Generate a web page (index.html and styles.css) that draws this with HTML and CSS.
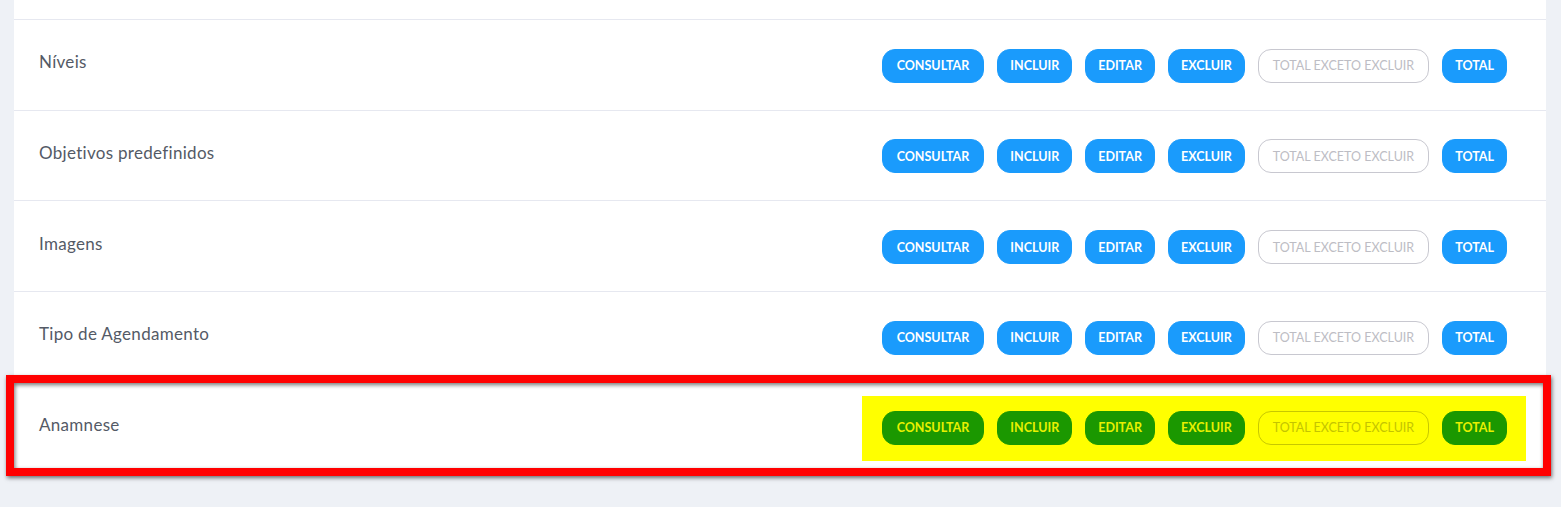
FILE: index.html
```html
<!doctype html>
<html>

<head>
    <meta charset="utf-8" />
    <title>Permissões</title>
    <link rel="stylesheet" href="styles.css">
</head>

<body>
    <div id="wrap">
        <div class="card">
            <!-- linha anterior, cortada no topo -->
            <div class="row row-cut"></div>

            <div class="row">
                <span class="label">Níveis</span>
                <div class="actions">
                    <a class="btn" href="javascript:;">CONSULTAR</a>
                    <a class="btn" href="javascript:;">INCLUIR</a>
                    <a class="btn" href="javascript:;">EDITAR</a>
                    <a class="btn" href="javascript:;">EXCLUIR</a>
                    <a class="btn btn-outline" href="javascript:;">TOTAL EXCETO EXCLUIR</a>
                    <a class="btn" href="javascript:;">TOTAL</a>
                </div>
            </div>

            <div class="row">
                <span class="label">Objetivos predefinidos</span>
                <div class="actions">
                    <a class="btn" href="javascript:;">CONSULTAR</a>
                    <a class="btn" href="javascript:;">INCLUIR</a>
                    <a class="btn" href="javascript:;">EDITAR</a>
                    <a class="btn" href="javascript:;">EXCLUIR</a>
                    <a class="btn btn-outline" href="javascript:;">TOTAL EXCETO EXCLUIR</a>
                    <a class="btn" href="javascript:;">TOTAL</a>
                </div>
            </div>

            <div class="row">
                <span class="label">Imagens</span>
                <div class="actions">
                    <a class="btn" href="javascript:;">CONSULTAR</a>
                    <a class="btn" href="javascript:;">INCLUIR</a>
                    <a class="btn" href="javascript:;">EDITAR</a>
                    <a class="btn" href="javascript:;">EXCLUIR</a>
                    <a class="btn btn-outline" href="javascript:;">TOTAL EXCETO EXCLUIR</a>
                    <a class="btn" href="javascript:;">TOTAL</a>
                </div>
            </div>

            <div class="row">
                <span class="label">Tipo de Agendamento</span>
                <div class="actions">
                    <a class="btn" href="javascript:;">CONSULTAR</a>
                    <a class="btn" href="javascript:;">INCLUIR</a>
                    <a class="btn" href="javascript:;">EDITAR</a>
                    <a class="btn" href="javascript:;">EXCLUIR</a>
                    <a class="btn btn-outline" href="javascript:;">TOTAL EXCETO EXCLUIR</a>
                    <a class="btn" href="javascript:;">TOTAL</a>
                </div>
            </div>

            <!-- linha destacada (marcação vermelha + marca-texto amarelo) -->
            <div class="row row-marked">
                <span class="label">Anamnese</span>
                <div class="actions highlight">
                    <a class="btn" href="javascript:;">CONSULTAR</a>
                    <a class="btn" href="javascript:;">INCLUIR</a>
                    <a class="btn" href="javascript:;">EDITAR</a>
                    <a class="btn" href="javascript:;">EXCLUIR</a>
                    <a class="btn btn-outline" href="javascript:;">TOTAL EXCETO EXCLUIR</a>
                    <a class="btn" href="javascript:;">TOTAL</a>
                </div>
                <div class="red-frame"></div>
            </div>
        </div>
    </div>
</body>

</html>
```

FILE: styles.css
```css
* {
    margin: 0;
    padding: 0;
    box-sizing: border-box;
}

a {
    text-decoration: none;
}

html,
body {
    height: 100%;
    overflow: hidden;
    background: #eef1f6;
    font-family: "Lato", "Noto Sans", sans-serif;
}

#wrap {
    padding: 0 15px 0 14px;
}

.card {
    background: #fff;
}

.row {
    display: flex;
    align-items: center;
    justify-content: space-between;
    height: 90.67px;
    padding: 2px 39px 0 25px;
    border-top: 1px solid #e6e8f0;
    position: relative;
}

.row:first-child {
    border-top: 0;
}

.row-cut {
    height: 19px;
    padding: 0;
}

.row .label {
    font-size: 17px;
    color: #545a66;
    margin-top: -8px;
    letter-spacing: 0.3px;
}

.actions {
    display: flex;
    gap: 13px;
}

.btn {
    display: flex;
    align-items: center;
    height: 34px;
    padding: 0 12px;
    border-radius: 13px;
    background: #1a9bfc;
    color: #fff;
    font-size: 12.5px;
    font-weight: 700;
    border: 1px solid #1a9bfc;
}

.btn:first-child {
    padding: 0 14px;
}

.btn-outline {
    background: transparent;
    color: #bdbdc4;
    border-color: #c8c8d0;
    font-weight: 400;
    padding: 0 14px;
}

/* marca-texto amarelo */
.actions.highlight {
    background: #ffff00;
    padding: 15px 19px 16px 20px;
    margin-right: -19px;
}

.highlight .btn {
    background: #1b9800;
    border-color: #1b9800;
    color: #e8f000;
}

.highlight .btn-outline {
    background: transparent;
    border-color: #c8c800;
    color: #c4c400;
}

/* moldura vermelha por cima da linha */
.red-frame {
    position: absolute;
    left: -8px;
    right: -5px;
    top: -8px;
    bottom: -4px;
    border: 8px solid #ff0000;
    box-shadow: 1px 2px 4px rgba(0, 0, 0, .55), inset 1px 2px 4px rgba(0, 0, 0, .55);
    pointer-events: none;
}
```
